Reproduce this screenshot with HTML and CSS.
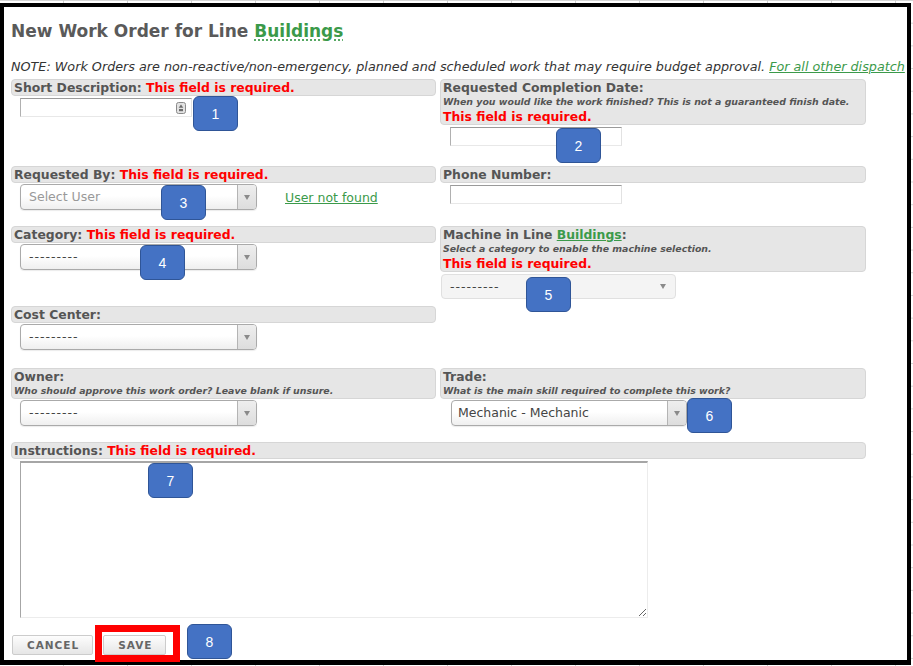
FILE: index.html
```html
<!DOCTYPE html>
<html lang="en">
<head>
<meta charset="utf-8">
<title>New Work Order</title>
<link rel="stylesheet" href="styles.css">
</head>
<body>
<div class="frame">
  <h1 class="title">New Work Order for Line <a class="title-link">Buildings</a></h1>
  <p class="note">NOTE: Work Orders are non-reactive/non-emergency, planned and scheduled work that may require budget approval. <a class="green-link">For all other dispatch</a></p>

  <div class="form">
    <div class="field">
      <div class="bar">Short Description: <span class="req">This field is required.</span></div>
      <div class="input-wrap ctrl-left">
        <input class="text-input" type="text">
        <svg class="key-icon" width="10" height="12" viewBox="0 0 10 12"><rect x="0.5" y="0.5" width="9" height="11" rx="2" fill="#e2e2e2" stroke="#8a8a8a"/><path d="M5 2.5 L7.3 5.8 L2.7 5.8 Z" fill="#6a6a6a"/><rect x="3" y="7" width="4" height="2.2" fill="#6a6a6a"/></svg>
      </div>
    </div>
    <div class="field">
      <div class="bar">Requested Completion Date:
        <span class="hint">When you would like the work finished? This is not a guaranteed finish date.</span>
        <span class="req line">This field is required.</span>
      </div>
      <input class="text-input ctrl-right" type="text">
    </div>

    <div class="field">
      <div class="bar">Requested By: <span class="req">This field is required.</span></div>
      <div class="user-row">
        <div class="select">
          <span class="select-text placeholder">Select User</span>
          <span class="select-arrow"><i class="tri"></i></span>
        </div>
        <a class="green-link user-link">User not found</a>
      </div>
    </div>
    <div class="field">
      <div class="bar">Phone Number:</div>
      <input class="text-input ctrl-right" type="text">
    </div>

    <div class="field">
      <div class="bar">Category: <span class="req">This field is required.</span></div>
      <div class="select ctrl-sel">
        <span class="select-text dash">---------</span>
        <span class="select-arrow"><i class="tri"></i></span>
      </div>
    </div>
    <div class="field">
      <div class="bar">Machine in Line <a class="green-link">Buildings</a>:
        <span class="hint">Select a category to enable the machine selection.</span>
        <span class="req line">This field is required.</span>
      </div>
      <div class="select disabled">
        <span class="select-text dash">---------</span>
        <span class="select-arrow"><i class="tri"></i></span>
      </div>
    </div>

    <div class="field">
      <div class="bar">Cost Center:</div>
      <div class="select ctrl-sel">
        <span class="select-text dash">---------</span>
        <span class="select-arrow"><i class="tri"></i></span>
      </div>
    </div>
    <div class="field empty"></div>

    <div class="field">
      <div class="bar">Owner:
        <span class="hint">Who should approve this work order? Leave blank if unsure.</span>
      </div>
      <div class="select ctrl-sel">
        <span class="select-text dash">---------</span>
        <span class="select-arrow"><i class="tri"></i></span>
      </div>
    </div>
    <div class="field">
      <div class="bar">Trade:
        <span class="hint">What is the main skill required to complete this work?</span>
      </div>
      <div class="select trade">
        <span class="select-text">Mechanic - Mechanic</span>
        <span class="select-arrow"><i class="tri"></i></span>
      </div>
    </div>

    <div class="field wide">
      <div class="bar">Instructions: <span class="req">This field is required.</span></div>
      <textarea class="textarea"></textarea>
    </div>
  </div>

  <div class="actions">
    <button class="btn" type="button">CANCEL</button>
    <button class="btn" type="button">SAVE</button>
  </div>
</div>

<div class="badge b1">1</div>
<div class="badge b2">2</div>
<div class="badge b3">3</div>
<div class="badge b4">4</div>
<div class="badge b5">5</div>
<div class="badge b6">6</div>
<div class="badge b7">7</div>
<div class="badge b8">8</div>
<div class="save-mark"></div>
</body>
</html>
```

FILE: styles.css
```css
html, body {
  margin: 0;
}
body {
  padding-top: 3px;
  width: 913px;
  height: 666px;
  box-sizing: border-box;
  overflow: hidden;
  font-family: "DejaVu Sans", Verdana, sans-serif;
  background-color: #ffffff;
  background-image:
    linear-gradient(to right, #d0d0d0 1px, transparent 1px),
    linear-gradient(to bottom, #d6d6d6 1px, transparent 1px);
  background-size: 64px 22.7px, 64px 22.7px;
  background-position: 63px 0, 0 0;
}

.frame {
  width: 911px;
  height: 662px;
  box-sizing: border-box;
  border: 4px solid #000;
  border-bottom-width: 5px;
  background: #fff;
  overflow: hidden;
  padding: 14px 0 0 7px;
}

.title {
  margin: 0;
  font-size: 17px;
  line-height: 20px;
  font-weight: bold;
  color: #5a5a5a;
}
.title-link {
  color: #3b9a4a;
  text-decoration: underline dotted;
  text-underline-offset: 3px;
}

.note {
  margin: 18px 0 0;
  font-size: 12.75px;
  line-height: 15px;
  font-style: italic;
  color: #333;
  white-space: nowrap;
}
.green-link {
  color: #3b9a4a;
  text-decoration: underline;
}

.form {
  margin-top: 5px;
  display: grid;
  grid-template-columns: 425px 426px;
  column-gap: 4px;
  grid-template-rows: 87px 60px 80px 62px 74px auto;
}
.wide {
  grid-column: 1 / -1;
}

.bar {
  background: #e6e6e6;
  border: 1px solid #d6d6d6;
  border-radius: 4px;
  padding: 0 2px;
  font-size: 12.4px;
  line-height: 15px;
  font-weight: bold;
  color: #555;
}
.req {
  color: #ff0000;
}
.req.line {
  display: block;
}
.hint {
  display: block;
  font-size: 9.4px;
  line-height: 14px;
  font-style: italic;
  font-weight: bold;
  color: #555;
}

.text-input {
  display: block;
  width: 172px;
  height: 19px;
  box-sizing: border-box;
  margin: 2px 0 0;
  padding: 0 4px;
  border-style: solid;
  border-width: 1px;
  border-color: #9a9a9a #e2e2e2 #e8e8e8 #b0b0b0;
  background: #fff;
  font-family: "DejaVu Sans", sans-serif;
  font-size: 12.5px;
}
.ctrl-right {
  margin-left: 10px;
}
.input-wrap {
  position: relative;
  width: 172px;
}
.ctrl-left {
  margin-left: 9px;
}
.key-icon {
  position: absolute;
  right: 6px;
  top: 4px;
}

.user-row {
  display: flex;
  align-items: center;
  gap: 28px;
  margin: 1px 0 0 9px;
}
.user-link {
  font-size: 12.5px;
  line-height: 15px;
  padding-top: 1px;
}

.select {
  display: flex;
  width: 237px;
  height: 26px;
  box-sizing: border-box;
  border: 1px solid #aaa;
  border-radius: 4px;
  background: linear-gradient(#ffffff 0%, #ffffff 45%, #efefef 100%);
  box-shadow: 0 1px 1px rgba(0, 0, 0, 0.08);
  font-size: 12.5px;
  line-height: 24px;
  color: #444;
}
.ctrl-sel {
  margin: 1px 0 0 9px;
}
.select-text {
  flex: 1;
  padding-left: 8px;
  white-space: nowrap;
  overflow: hidden;
}
.placeholder {
  color: #999;
}
.dash {
  letter-spacing: 1px;
  color: #444;
}
.select-arrow {
  width: 18px;
  border-left: 1px solid #b4b4b4;
  border-radius: 0 3px 3px 0;
  background: linear-gradient(#eeeeee, #dddddd);
  display: flex;
  align-items: center;
  justify-content: center;
}
.tri {
  display: block;
  width: 0;
  height: 0;
  border-left: 3px solid transparent;
  border-right: 3px solid transparent;
  border-top: 5px solid #8a8a8a;
}
.select.disabled {
  width: 235px;
  height: 25px;
  margin: 2px 0 0 1px;
  background: #f4f4f4;
  border-color: #e0e0e0;
  box-shadow: none;
  line-height: 23px;
}
.select.disabled .select-arrow {
  border-left: none;
  background: none;
  width: 24px;
}
.select.trade {
  width: 236px;
  margin: 1px 0 0 11px;
  color: #444;
}
.select.trade .select-text {
  padding-left: 6px;
}

.textarea {
  display: block;
  margin: 2px 0 0 9px;
  width: 628px;
  height: 157px;
  box-sizing: border-box;
  border-style: solid;
  border-width: 2px 1px 1px 1px;
  border-color: #a6a6a6 #ececec #ececec #a6a6a6;
  resize: both;
  background: #fff;
}

.actions {
  display: flex;
  gap: 10px;
  margin: 17px 0 0 1px;
}
.btn {
  height: 20px;
  padding: 0 13px 0 14px;
  border: 1px solid #cccccc;
  border-radius: 2px;
  background: linear-gradient(#fdfdfd, #e6e6e6);
  font-family: "DejaVu Sans", sans-serif;
  font-weight: bold;
  font-size: 10.5px;
  line-height: 18px;
  letter-spacing: 1px;
  color: #666;
}

.badge {
  position: absolute;
  width: 45px;
  height: 35px;
  box-sizing: border-box;
  background: #4472c4;
  border: 1px solid #2f5597;
  border-radius: 6px;
  color: #fff;
  font-family: "Liberation Sans", Arial, sans-serif;
  font-size: 14px;
  display: flex;
  align-items: center;
  justify-content: center;
}
.b1 { left: 193px; top: 96px; }
.b2 { left: 556px; top: 128px; }
.b3 { left: 161px; top: 185px; }
.b4 { left: 140px; top: 245px; }
.b5 { left: 526px; top: 277px; }
.b6 { left: 687px; top: 398px; }
.b7 { left: 148px; top: 463px; }
.b8 { left: 187px; top: 624px; }

.save-mark {
  position: absolute;
  left: 95px;
  top: 625px;
  width: 85px;
  height: 37px;
  box-sizing: border-box;
  border: 7px solid #ff0000;
}
```
